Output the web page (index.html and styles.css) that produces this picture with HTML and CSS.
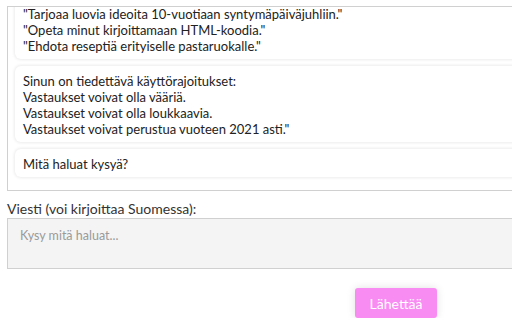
FILE: index.html
```html
<!DOCTYPE html>
<html lang="fi">
<head>
<meta charset="utf-8">
<link rel="stylesheet" href="styles.css">
</head>
<body>
<div class="chat">
  <div class="card card-first">
    "Tarjoaa luovia ideoita 10-vuotiaan syntymäpäiväjuhliin."<br>
    "Opeta minut kirjoittamaan HTML-koodia."<br>
    "Ehdota reseptiä erityiselle pastaruokalle."
  </div>
  <div class="card">
    Sinun on tiedettävä käyttörajoitukset:<br>
    Vastaukset voivat olla vääriä.<br>
    Vastaukset voivat olla loukkaavia.<br>
    Vastaukset voivat perustua vuoteen 2021 asti."
  </div>
  <div class="card">Mitä haluat kysyä?</div>
</div>
<label class="label" for="msg">Viesti (voi kirjoittaa Suomessa):</label>
<textarea id="msg" class="input" placeholder="Kysy mitä haluat..."></textarea>
<div class="actions">
  <button class="send">Lähettää</button>
</div>
</body>
</html>
```
FILE: styles.css
```css
html, body {
  margin: 0;
  padding: 0;
  background: #fff;
  font-family: Lato, "Open Sans", sans-serif;
  color: #222;
  overflow: hidden;
}
body {
  padding: 6px 0 0 7px;
  width: 540px;
}
.chat {
  height: 185px;
  border: 1px solid #d0d0d0;
  overflow: hidden;
  display: flex;
  flex-direction: column;
  justify-content: flex-end;
  gap: 7px;
  padding: 0 8px 13px 7px;
  box-sizing: border-box;
}
.card {
  flex: none;
  background: #fff;
  border-radius: 6px;
  box-shadow: 0 0 3px 1px rgba(0, 0, 0, 0.08);
  padding: 7px 8px 5px;
  font-size: 13px;
  line-height: 16px;
}
.card-first {
  padding-top: 9px;
}
.label {
  display: block;
  margin-top: 9px;
  font-size: 14px;
  line-height: 18px;
  color: #333;
}
.input {
  display: block;
  box-sizing: border-box;
  width: 540px;
  height: 51px;
  margin: 0;
  border: 1px solid #d0d0d0;
  background: #f4f4f4;
  padding: 9px 12px;
  font-family: inherit;
  font-size: 12.5px;
  resize: none;
}
.input::placeholder {
  color: #9a9a9a;
}
.actions {
  display: flex;
  padding: 19px 0 0 348px;
}
.send {
  width: 82px;
  height: 30px;
  border: none;
  border-radius: 3px;
  background: #f98cf3;
  color: #fff;
  font-family: inherit;
  font-size: 14px;
  box-shadow: 0 0 8px rgba(0, 0, 0, 0.12);
}
```
